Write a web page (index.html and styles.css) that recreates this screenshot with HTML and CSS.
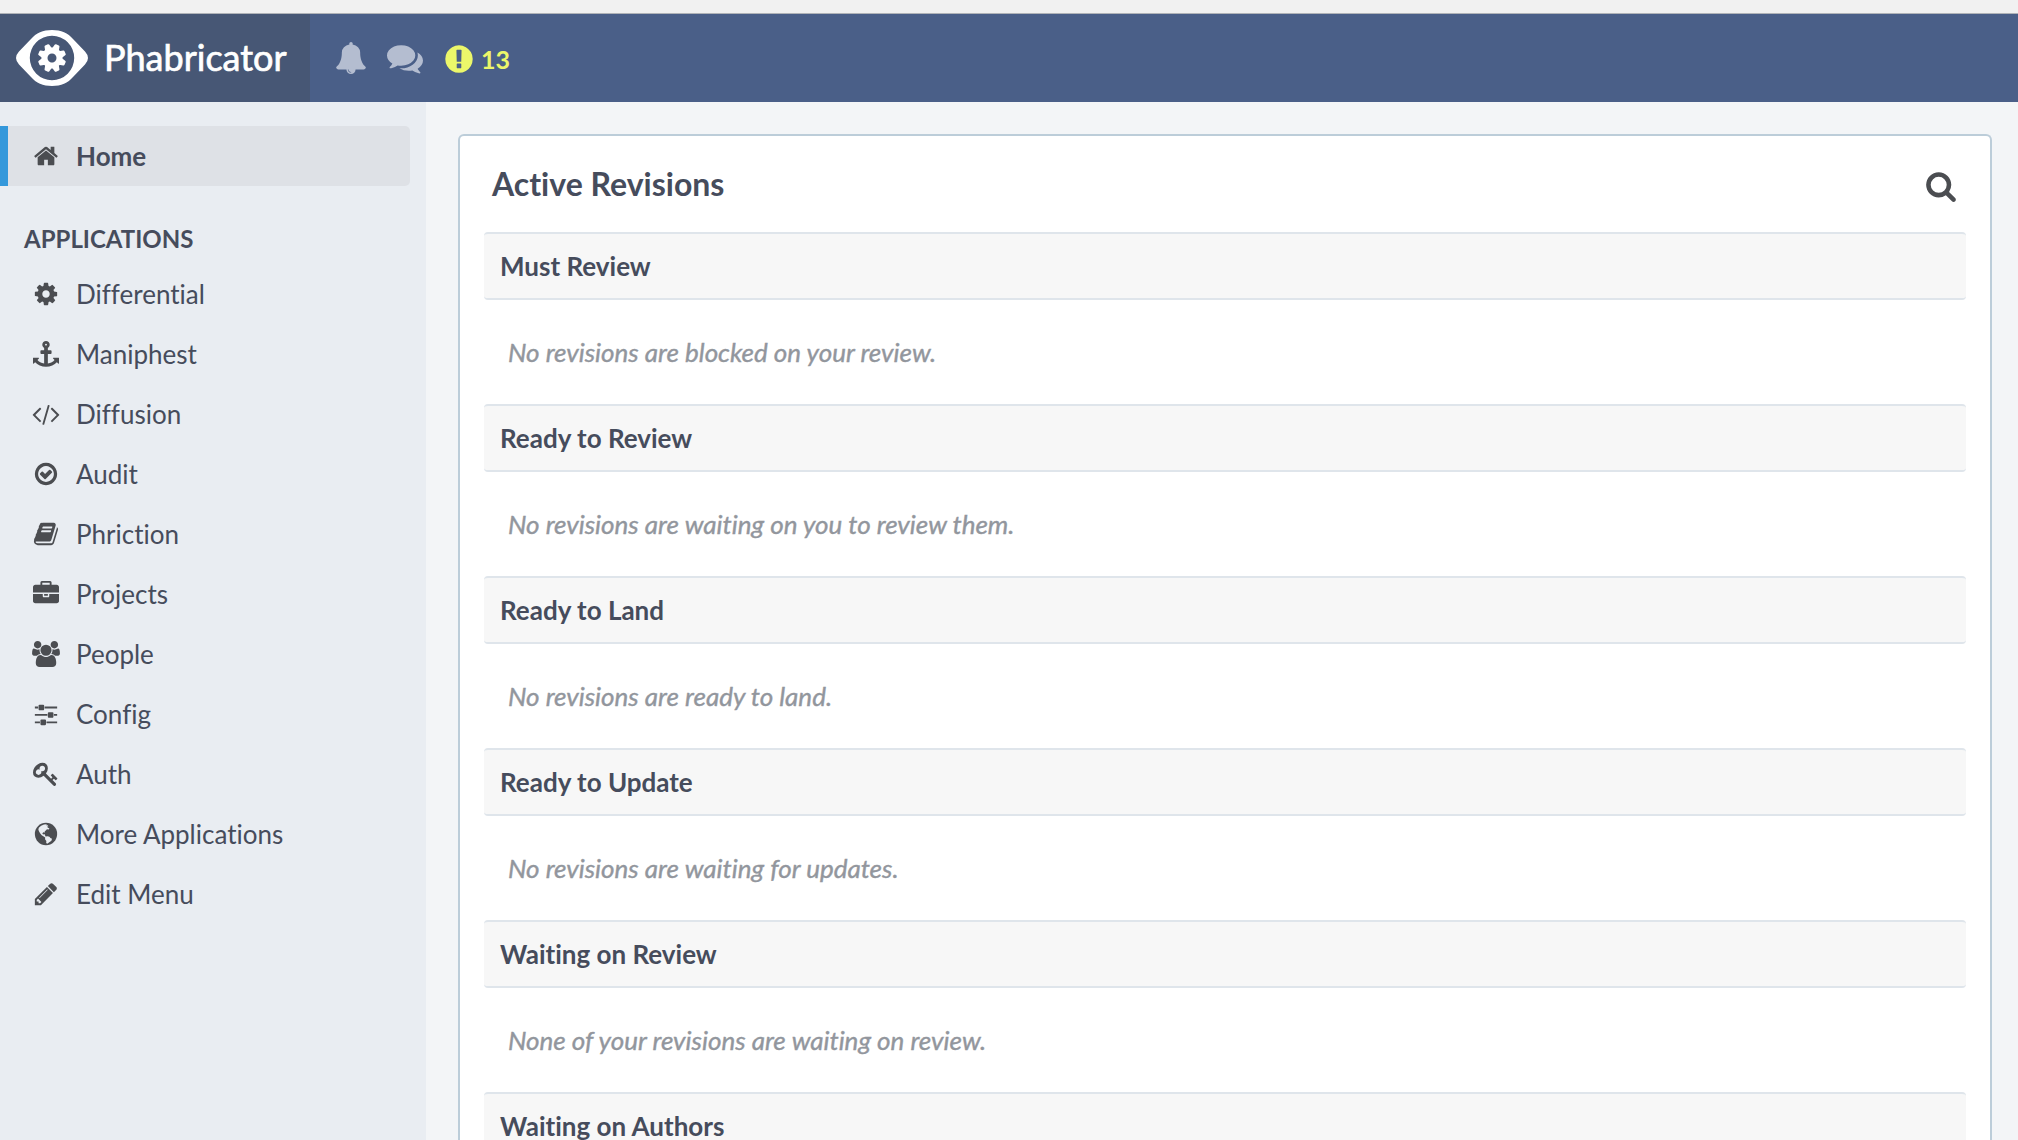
FILE: index.html
```html
<!DOCTYPE html>
<html lang="en">
<head>
<meta charset="utf-8">
<title>Phabricator</title>
<link rel="stylesheet" href="styles.css">
</head>
<body>
<div class="chrome-edge"></div>
<header class="topbar">
  <a class="brand">
    <svg class="brand-eye" viewBox="0 0 72 56"><path fill="#fff" fill-rule="evenodd" d="M36 0C45 0 52 3 57 9L69 21.500Q75 28 69 34.500L57 47C52 53 45 56 36 56S20 53 15 47L3 34.500Q-3 28 3 21.500L15 9C20 3 27 0 36 0ZM36 5.800A22.200 22.200 0 1 0 36 50.200A22.200 22.200 0 1 0 36 5.800Z"/><g transform="translate(36 28) rotate(22.500)" fill="#fff"><circle r="7.500" fill="none" stroke="#fff" stroke-width="6"/><path id="tooth" d="M-3.600-9L-2.600-13.200Q-2.400-14.200-1.500-14.200H1.500Q2.400-14.200 2.600-13.200L3.600-9Z"/><use href="#tooth" transform="rotate(45)"/><use href="#tooth" transform="rotate(90)"/><use href="#tooth" transform="rotate(135)"/><use href="#tooth" transform="rotate(180)"/><use href="#tooth" transform="rotate(225)"/><use href="#tooth" transform="rotate(270)"/><use href="#tooth" transform="rotate(315)"/></g></svg>
    <span class="brand-name">Phabricator</span>
  </a>
  <nav class="alerts">
    <svg class="icon bell" viewBox="0 0 1792 1792"><path d="M912 1696q0-16-16-16-59 0-101.500-42.500t-42.500-101.500q0-16-16-16t-16 16q0 73 51.500 124.500t124.500 51.500q16 0 16-16zm816-288q0 52-38 90t-90 38h-448q0 106-75 181t-181 75-181-75-75-181h-448q-52 0-90-38t-38-90q50-42 91-88t85-119.500 74.500-158.500 50-206 19.500-260q0-152 117-282.500t307-158.500q-8-19-8-39 0-40 28-68t68-28 68 28 28 68q0 20-8 39 190 28 307 158.500t117 282.500q0 139 19.500 260t50 206 74.500 158.500 85 119.500 91 88z"/></svg>
    <svg class="icon chat" viewBox="0 0 1792 1792"><path d="M1408 768q0 139-94 257t-256.500 186.500-353.500 68.500q-86 0-176-16-124 88-278 128-36 9-86 16h-3q-11 0-20.500-8t-11.500-21q-1-3-1-6.500t.5-6.500 2-6l2.500-5 3.500-5.500 4-5 4.500-5 4-4.500q5-6 23-25t26-29.500 22.500-29 25-38.500 20.500-44q-124-72-195-177t-71-224q0-139 94-257t256.500-186.500 353.500-68.500 353.500 68.500 256.500 186.500 94 257zm384 256q0 120-71 224.500t-195 176.500q10 24 20.500 44t25 38.500 22.500 29 26 29.500 23 25q1 1 4 4.500t4.500 5 4 5 3.500 5.500l2.500 5 2 6 .5 6.500-1 6.500q-3 14-13 22t-22 7q-50-7-86-16-154-40-278-128-90 16-176 16-271 0-472-132 58 4 88 4 161 0 309-45t264-129q125-92 192-212t67-254q0-77-23-152 129 71 204 178t75 230z"/></svg>
    <span class="issues">
      <svg class="icon" viewBox="0 0 1792 1792"><path d="M896 128q209 0 385.500 103t279.500 279.500 103 385.500-103 385.500-279.500 279.500-385.500 103-385.500-103-279.500-279.500-103-385.500 103-385.500 279.500-279.500 385.500-103zm128 1247v-190q0-14-9-23.500t-22-9.500h-192q-13 0-23 10t-10 23v190q0 13 10 23t23 10h192q13 0 22-9.500t9-23.500zm-2-344l18-621q0-12-10-18-10-8-24-8h-220q-14 0-24 8-10 6-10 18l17 621q0 10 10 17.500t24 7.500h185q14 0 23.500-7.500t10.500-17.500z"/></svg>
      <span>13</span>
    </span>
  </nav>
</header>
<div class="page">
  <aside class="sidebar">
    <a class="item current"><svg class="icon" viewBox="0 0 1792 1792"><path d="M1472 992v480q0 26-19 45t-45 19h-384v-384h-256v384h-384q-26 0-45-19t-19-45v-480q0-1 .5-3t.5-3l575-474 575 474q1 2 1 6zm223-69l-62 74q-8 9-21 11h-3q-13 0-21-7l-692-577-692 577q-12 8-24 7-13-2-21-11l-62-74q-8-10-7-23.500t11-21.500l719-599q32-26 76-26t76 26l244 204v-195q0-14 9-23t23-9h192q14 0 23 9t9 23v408l219 182q10 8 11 21.500t-7 23.500z"/></svg><span>Home</span></a>
    <h2 class="group">APPLICATIONS</h2>
    <a class="item"><svg class="icon" viewBox="0 0 1792 1792"><path d="M1152 896q0-106-75-181t-181-75-181 75-75 181 75 181 181 75 181-75 75-181zm512-109v222q0 12-8 23t-20 13l-185 28q-19 54-39 91 35 50 107 138 10 12 10 25t-9 23q-27 37-99 108t-94 71q-12 0-26-9l-138-108q-44 23-91 38-16 136-29 186-7 28-36 28h-222q-14 0-24.500-8.500t-11.500-21.500l-28-184q-49-16-90-37l-141 107q-10 9-25 9-14 0-25-11-126-114-165-168-7-10-7-23 0-12 8-23 15-21 51-66.500t54-70.500q-27-50-41-99l-183-27q-13-2-21-12.500t-8-23.500v-222q0-12 8-23t19-13l186-28q14-46 39-92-40-57-107-138-10-12-10-24 0-10 9-23 26-36 98.500-107.500t94.500-71.500q13 0 26 10l138 107q44-23 91-38 16-136 29-186 7-28 36-28h222q14 0 24.500 8.500t11.500 21.500l28 184q49 16 90 37l142-107q9-9 24-9 13 0 25 10 129 119 165 170 7 8 7 22 0 12-8 23-15 21-51 66.500t-54 70.500q26 50 41 98l183 28q13 2 21 12.500t8 23.500z"/></svg><span>Differential</span></a>
    <a class="item"><svg class="icon" viewBox="0 0 1792 1792"><path d="M960 256q0-26-19-45t-45-19-45 19-19 45 19 45 45 19 45-19 19-45zm832 928v352q0 22-20 30-8 2-12 2-13 0-23-9l-93-93q-119 143-318.500 226.500t-429.500 83.500-429.500-83.500-318.500-226.500l-93 93q-9 9-23 9-4 0-12-2-20-8-20-30v-352q0-14 9-23t23-9h352q22 0 30 20 8 19-7 35l-100 100q67 91 189.500 153.500t271.500 82.500v-647h-192q-26 0-45-19t-19-45v-128q0-26 19-45t45-19h192v-163q-58-34-93-92.500t-35-128.500q0-106 75-181t181-75 181 75 75 181q0 70-35 128.500t-93 92.500v163h192q26 0 45 19t19 45v128q0 26-19 45t-45 19h-192v647q149-20 271.500-82.500t189.500-153.500l-100-100q-15-16-7-35 8-20 30-20h352q14 0 23 9t9 23z"/></svg><span>Maniphest</span></a>
    <a class="item"><svg class="icon" viewBox="0 0 1792 1792"><path d="M553 1399l-50 50q-10 10-23 10t-23-10l-466-466q-10-10-10-23t10-23l466-466q10-10 23-10t23 10l50 50q10 10 10 23t-10 23l-393 393 393 393q10 10 10 23t-10 23zm591-1067l-373 1291q-4 13-15.500 19.500t-23.500 2.500l-62-17q-13-4-19.500-15.500t-2.500-24.500l373-1291q4-13 15.500-19.500t23.500-2.500l62 17q13 4 19.500 15.500t2.500 24.500zm657 651l-466 466q-10 10-23 10t-23-10l-50-50q-10-10-10-23t10-23l393-393-393-393q-10-10-10-23t10-23l50-50q10-10 23-10t23 10l466 466q10 10 10 23t-10 23z"/></svg><span>Diffusion</span></a>
    <a class="item"><svg class="icon" viewBox="0 0 1792 1792"><path d="M1299 813l-422 422q-19 19-45 19t-45-19l-294-294q-19-19-19-45t19-45l102-102q19-19 45-19t45 19l147 147 275-275q19-19 45-19t45 19l102 102q19 19 19 45t-19 45zm141 83q0-148-73-273t-198-198-273-73-273 73-198 198-73 273 73 273 198 198 273 73 273-73 198-198 73-273zm224 0q0 209-103 385.500t-279.500 279.500-385.500 103-385.500-103-279.500-279.500-103-385.500 103-385.500 279.500-279.500 385.500-103 385.500 103 279.500 279.500 103 385.500z"/></svg><span>Audit</span></a>
    <a class="item"><svg class="icon" viewBox="0 0 1792 1792"><path d="M1703 478q40 57 18 129l-275 906q-19 64-76.500 107.500t-122.500 43.500h-923q-77 0-148.500-53.500t-99.500-131.500q-24-67-2-127 0-4 3-27t4-37q1-8-3-21.500t-3-19.500q2-11 8-21t16.500-23.500 16.500-23.500q23-38 45-91.500t30-91.500q3-10 .5-30t-.5-28q3-11 17-28t17-23q21-36 42-92t25-90q1-9-2.500-32t.5-28q4-13 22-30.500t22-22.500q19-26 42.500-84.500t27.500-96.500q1-8-3-25.500t-2-26.500q2-8 9-18t18-23 17-21q8-12 16.500-30.500t15-35 16-36 19.500-32 26.500-23.500 36-11.500 47.500 5.500l-1 3q38-9 51-9h761q74 0 114 56t18 130l-274 906q-36 119-71.500 153.500t-128.500 34.500h-869q-27 0-38 15-11 16-1 43 24 70 144 70h923q29 0 56-15.500t35-41.500l300-987q7-22 5-57 38 15 59 43zm-1064 2q-4 13 2 22.500t20 9.500h608q13 0 25.500-9.500t16.500-22.500l21-64q4-13-2-22.500t-20-9.500h-608q-13 0-25.500 9.500t-16.500 22.500zm-83 256q-4 13 2 22.500t20 9.500h608q13 0 25.500-9.500t16.500-22.500l21-64q4-13-2-22.500t-20-9.500h-608q-13 0-25.500 9.500t-16.500 22.500z"/></svg><span>Phriction</span></a>
    <a class="item"><svg class="icon" viewBox="0 0 1792 1792"><path d="M640 256h512v-128h-512v128zm1152 640v480q0 66-47 113t-113 47h-1472q-66 0-113-47t-47-113v-480h672v160q0 26 19 45t45 19h320q26 0 45-19t19-45v-160h672zm-768 0v128h-256v-128h256zm768-480v384h-1792v-384q0-66 47-113t113-47h352v-160q0-40 28-68t68-28h576q40 0 68 28t28 68v160h352q66 0 113 47t47 113z"/></svg><span>Projects</span></a>
    <a class="item"><svg class="icon" viewBox="64 0 1792 1792"><path d="M593 896q-162 5-265 128h-134q-82 0-138-40.500t-56-118.500q0-353 124-353 6 0 43.500 21t97.500 42.500 119 21.500q67 0 133-23-5 37-5 66 0 139 81 256zm1071 637q0 120-73 189.500t-194 69.500h-874q-121 0-194-69.500t-73-189.500q0-53 3.500-103.500t14-109 26.500-108.500 43-97.500 62-81 85.500-53.500 111.500-20q10 0 43 21.500t73 48 107 48 135 21.500 135-21.500 107-48 73-48 43-21.500q61 0 111.500 20t85.500 53.500 62 81 43 97.500 26.500 108.500 14 109 3.500 103.500zm-1024-1277q0 106-75 181t-181 75-181-75-75-181 75-181 181-75 181 75 75 181zm704 384q0 159-112.500 271.500t-271.500 112.500-271.500-112.500-112.500-271.500 112.500-271.500 271.500-112.500 271.500 112.500 112.500 271.500zm576 225q0 78-56 118.500t-138 40.500h-134q-103-123-265-128 81-117 81-256 0-29-5-66 66 23 133 23 59 0 119-21.500t97.500-42.500 43.500-21q124 0 124 353zm-128-609q0 106-75 181t-181 75-181-75-75-181 75-181 181-75 181 75 75 181z"/></svg><span>People</span></a>
    <a class="item"><svg class="icon" viewBox="-128 0 1792 1792"><path d="M352 1408v128h-352v-128h352zm352-128q26 0 45 19t19 45v256q0 26-19 45t-45 19h-256q-26 0-45-19t-19-45v-256q0-26 19-45t45-19h256zm160-384v128h-864v-128h864zm-640-512v128h-224v-128h224zm1312 1024v128h-736v-128h736zm-960-1152q26 0 45 19t19 45v256q0 26-19 45t-45 19h-256q-26 0-45-19t-19-45v-256q0-26 19-45t45-19h256zm640 512q26 0 45 19t19 45v256q0 26-19 45t-45 19h-256q-26 0-45-19t-19-45v-256q0-26 19-45t45-19h256zm320 128v128h-224v-128h224zm0-512v128h-864v-128h864z"/></svg><span>Config</span></a>
    <a class="item"><svg class="icon" viewBox="0 0 1792 1792"><path d="M832 512q0-80-56-136t-136-56-136 56-56 136q0 42 19 83-41-19-83-19-80 0-136 56t-56 136 56 136 136 56 136-56 56-136q0-42-19-83 41 19 83 19 80 0 136-56t56-136zm851 704q0 17-49 66t-66 49q-9 0-28.500-16t-36.500-33-38.500-40-24.500-26l-96 96 220 220q28 28 28 68 0 42-39 81t-81 39q-40 0-68-28l-671-671q-176 131-365 131-163 0-265.500-102.500t-102.500-265.500q0-160 95-313t248-248 313-95q163 0 265.500 102.500t102.500 265.500q0 189-131 365l355 355 96-96q-3-3-26-24.500t-40-38.500-33-36.500-16-28.500q0-17 49-66t66-49q13 0 23 10 6 6 46 44.500t82 79.500 86.500 86 73 78 28.500 41z"/></svg><span>Auth</span></a>
    <a class="item"><svg class="icon" viewBox="0 0 1792 1792"><circle cx="896" cy="896" r="768"/><path class="land" d="M400 470L560 330 760 245 960 225 900 300 1010 290 1060 370 960 400 1040 470 1130 520 1090 580 960 560 900 640 800 730 830 800 720 780 640 850 700 930 790 900 830 980 870 1060 1010 1050 1130 1090 1200 1180 1310 1230 1270 1360 1150 1450 980 1560 910 1520 920 1380 830 1260 840 1130 740 1060 600 980 490 840 420 720 370 600Z"/></svg><span>More Applications</span></a>
    <a class="item"><svg class="icon" viewBox="0 0 1792 1792"><path d="M491 1536l91-91-235-235-91 91v107h128v128h107zm523-928q0-22-22-22-10 0-17 7l-542 542q-7 7-7 17 0 22 22 22 10 0 17-7l542-542q7-7 7-17zm-54-192l416 416-832 832h-416v-416zm683 96q0 53-37 90l-166 166-416-416 166-165q36-38 90-38 53 0 91 38l235 234q37 39 37 91z"/></svg><span>Edit Menu</span></a>
  </aside>
  <main class="content">
    <section class="panel">
      <div class="panel-head">
        <h1>Active Revisions</h1>
        <svg class="icon" viewBox="0 0 1792 1792"><path d="M1216 832q0-185-131.500-316.500t-316.500-131.500-316.500 131.500-131.500 316.500 131.500 316.500 316.500 131.500 316.500-131.500 131.500-316.500zm512 832q0 52-38 90t-90 38q-54 0-90-38l-343-342q-179 124-399 124-143 0-273.500-55.500t-225-150-150-225-55.500-273.500 55.500-273.500 150-225 225-150 273.500-55.500 273.500 55.500 225 150 150 225 55.500 273.500q0 220-124 399l343 343q37 37 37 90z"/></svg>
      </div>
      <h3>Must Review</h3>
      <p>No revisions are blocked on your review.</p>
      <h3>Ready to Review</h3>
      <p>No revisions are waiting on you to review them.</p>
      <h3>Ready to Land</h3>
      <p>No revisions are ready to land.</p>
      <h3>Ready to Update</h3>
      <p>No revisions are waiting for updates.</p>
      <h3>Waiting on Review</h3>
      <p>None of your revisions are waiting on review.</p>
      <h3>Waiting on Authors</h3>
    </section>
  </main>
</div>
</body>
</html>
```
FILE: styles.css
```css
* { box-sizing: border-box; }
html, body { height: 100%; overflow: hidden; }
body {
  margin: 0;
  display: flex;
  flex-direction: column;
  font-family: Lato, sans-serif;
  font-size: 26px;
  font-variant-ligatures: none;
  color: #464c5c;
  background: #f3f5f7;
}
h1, h2, h3, p { margin: 0; }
.icon { width: 26px; height: 26px; flex: none; fill: #4b4d51; overflow: visible; }
.land { fill: #e9edf2; }

.chrome-edge { flex: none; height: 14px; background: #f1f1f1; border-bottom: 1px solid #b0b3b8; }
.topbar { flex: none; height: 88px; display: flex; background: #4a5f88; }
.brand { width: 310px; display: flex; align-items: center; padding-left: 16px; background: #475775; color: #fff; }
.brand-eye { width: 72px; height: 56px; }
.brand-name { margin-left: 16px; padding-bottom: 3px; font-size: 36px; -webkit-text-stroke: 0.7px #fff; }
.alerts { display: flex; align-items: center; padding-left: 25px; }
.alerts .icon { fill: #b4bdd0; }
.alerts .bell { width: 32px; height: 32px; }
.alerts .chat { width: 36px; height: 36px; margin-left: 20px; }
.issues { display: flex; align-items: center; gap: 6px; margin-left: 20px; padding-top: 1px; font-size: 25px; font-weight: 700; color: #ecf76a; }
.alerts .issues .icon { width: 32px; height: 32px; fill: #ecf76a; }

.page { flex: 1; min-height: 0; display: flex; }
.sidebar { flex: none; width: 426px; padding-top: 24px; background: #e9edf2; }
.item { display: flex; align-items: center; height: 60px; padding-left: 33px; }
.item span { margin-left: 17px; }
.current { width: 410px; padding-left: 25px; border-left: 8px solid #3498db; border-radius: 0 5px 5px 0; background: #dee1e6; font-weight: 700; }
.group { height: 78px; padding: 38px 0 0 24px; font-size: 24px; line-height: 30px; font-weight: 700; }

.content { flex: 1; min-height: 0; display: flex; padding: 32px 26px 0 32px; }
.panel { flex: 1; overflow: hidden; padding: 0 24px; border: 2px solid #bccdd9; border-bottom: 0; border-radius: 6px 6px 0 0; background: #fff; }
.panel-head { height: 96px; display: flex; align-items: center; justify-content: space-between; padding: 4px 9px 0 8px; }
.panel-head h1 { padding-bottom: 5px; font-size: 32px; font-weight: 700; }
.panel-head .icon { width: 32px; height: 32px; }
.panel h3 { height: 68px; padding-left: 16px; border: solid #dfe5eb; border-width: 2px 0; border-radius: 4px; background: #f7f7f7; font-size: 26px; line-height: 64px; font-weight: 700; }
.panel p { height: 104px; padding-left: 24px; line-height: 104px; font-style: italic; color: #92969d; -webkit-text-stroke: 0.4px #92969d; }
```
